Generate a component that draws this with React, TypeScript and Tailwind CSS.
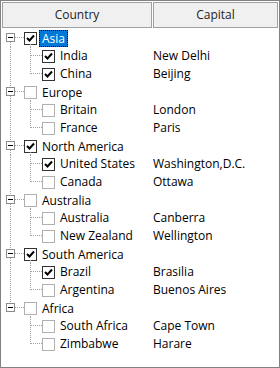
import React from "react";

type Child = { name: string; capital: string; checked: boolean };
type Group = { name: string; checked: boolean; selected?: boolean; children: Child[] };

const groups: Group[] = [
  { name: "Asia", checked: true, selected: true, children: [
    { name: "India", capital: "New Delhi", checked: true },
    { name: "China", capital: "Beijing", checked: true },
  ] },
  { name: "Europe", checked: false, children: [
    { name: "Britain", capital: "London", checked: false },
    { name: "France", capital: "Paris", checked: false },
  ] },
  { name: "North America", checked: true, children: [
    { name: "United States", capital: "Washington,D.C.", checked: true },
    { name: "Canada", capital: "Ottawa", checked: false },
  ] },
  { name: "Australia", checked: false, children: [
    { name: "Australia", capital: "Canberra", checked: false },
    { name: "New Zealand", capital: "Wellington", checked: false },
  ] },
  { name: "South America", checked: true, children: [
    { name: "Brazil", capital: "Brasilia", checked: true },
    { name: "Argentina", capital: "Buenos Aires", checked: false },
  ] },
  { name: "Africa", checked: false, children: [
    { name: "South Africa", capital: "Cape Town", checked: false },
    { name: "Zimbabwe", capital: "Harare", checked: false },
  ] },
];

const LINE = "#a0a0a0";

function DLine({ x1, y1, x2, y2 }: { x1: number; y1: number; x2: number; y2: number }) {
  return (
    <line x1={x1} y1={y1} x2={x2} y2={y2} stroke={LINE} strokeWidth={1} strokeDasharray="1 1" shapeRendering="crispEdges" />
  );
}

function CheckBox({ checked }: { checked: boolean }) {
  return (
    <div
      className={
        "w-[13px] h-[13px] shrink-0 border bg-white flex items-center justify-center " +
        (checked ? "border-[#333333]" : "border-[#b0b0b0]")
      }
    >
      {checked && (
        <svg width="11" height="11" viewBox="0 0 11 11">
          <path d="M2 5 L4.5 7.5 L9 2.5" fill="none" stroke="#000" strokeWidth="2" />
        </svg>
      )}
    </div>
  );
}

export default function App() {
  const font = { fontFamily: '"Open Sans", "Noto Sans", sans-serif' };
  return (
    <div className="w-[280px] h-[368px] border border-[#828282] bg-white p-[1px] text-[12px] text-black" style={font}>
      <div className="flex h-[26px] gap-[1px]">
        <div className="w-[150px] border border-[#a0a0a0] bg-[#f0f0f0] flex items-center justify-center text-[#222]">
          Country
        </div>
        <div className="flex-1 border border-[#a0a0a0] bg-[#f0f0f0] flex items-center justify-center text-[#222]">
          Capital
        </div>
      </div>
      <div className="pt-[1px]">
        {groups.map((g, gi) => {
          const lastGroup = gi === groups.length - 1;
          return (
            <React.Fragment key={gi}>
              <div className="flex h-[18px] items-center">
                <div className="relative w-[150px] h-full flex items-center shrink-0">
                  <svg className="absolute left-0 top-0" width="40" height="18">
                    {gi > 0 && <DLine x1={8.5} y1={0} x2={8.5} y2={4} />}
                    {!lastGroup && <DLine x1={8.5} y1={13} x2={8.5} y2={18} />}
                    <DLine x1={13} y1={8.5} x2={22} y2={8.5} />
                    <DLine x1={28.5} y1={15} x2={28.5} y2={18} />
                    <rect x={4.5} y={4.5} width={8} height={8} fill="#fff" stroke="#8c8c8c" shapeRendering="crispEdges" />
                    <line x1={6} y1={8.5} x2={11} y2={8.5} stroke="#000" shapeRendering="crispEdges" />
                  </svg>
                  <div className="w-[22px] shrink-0" />
                  <CheckBox checked={g.checked} />
                  <span
                    className={
                      "ml-[2px] px-[2px] h-[17px] leading-[15px] border whitespace-nowrap " +
                      (g.selected ? "bg-[#0078d7] text-white border-dotted border-black" : "border-transparent")
                    }
                  >
                    {g.name}
                  </span>
                </div>
                <div className="flex-1" />
              </div>
              {g.children.map((c, ci) => {
                const lastChild = ci === g.children.length - 1;
                return (
                  <div key={ci} className="flex h-[18px] items-center">
                    <div className="relative w-[150px] h-full flex items-center shrink-0">
                      <svg className="absolute left-0 top-0" width="42" height="18">
                        {!lastGroup && <DLine x1={8.5} y1={0} x2={8.5} y2={18} />}
                        <DLine x1={28.5} y1={0} x2={28.5} y2={lastChild ? 9 : 18} />
                        <DLine x1={29} y1={8.5} x2={40} y2={8.5} />
                      </svg>
                      <div className="w-[40px] shrink-0" />
                      <CheckBox checked={c.checked} />
                      <span className="ml-[3px] px-[2px] whitespace-nowrap">{c.name}</span>
                    </div>
                    <div className="flex-1 pl-[1px] whitespace-nowrap">{c.capital}</div>
                  </div>
                );
              })}
            </React.Fragment>
          );
        })}
      </div>
    </div>
  );
}
